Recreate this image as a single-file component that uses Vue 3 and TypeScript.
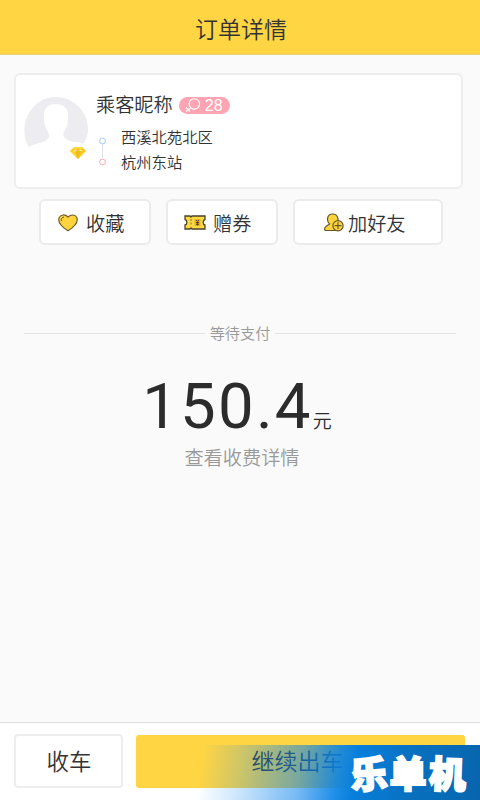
<script setup lang="ts">
const passenger = { name: '乘客昵称', age: 28 }
const route = { from: '西溪北苑北区', to: '杭州东站' }
const price = '150.4'
</script>

<template>
  <div class="page">
    <header class="header"><h1>订单详情</h1></header>

    <section class="card">
      <div class="avatar">
        <svg width="64" height="64" viewBox="0 0 64 64">
          <path d="M5 50C-1 42-1 27 4 18C10 6 20 0 32 0C49 0 64 14 64 32C64 38 62 43 59 47C54 44 50 46 46 44C39 41 38 38 41 33C44 28 44 24 44 18C44 11 39 7 32 7C24 7 20 11 20 18C20 25 20 28 23 33C26 39 26 41 21 44C17 46 10 47 5 50Z" fill="#ececf1" />
        </svg>
        <svg class="gem" width="16" height="13" viewBox="0 0 16 13">
          <path d="M4 1H12L16 5L8 13L0 5Z" fill="#fbc91d" />
          <path d="M4 1L5 5L8 1.5L11 5L12 1Z" fill="#ffd94f" />
          <path d="M0 5H5L8 13Z" fill="#ffd22f" />
          <path d="M5 5H11L8 13Z" fill="#f2bb1d" />
          <path d="M3.5 4.5L5 5L6.5 4.5M9.5 4.5H12" stroke="#fff4b9" fill="none" />
        </svg>
      </div>
      <div class="info">
        <div class="person">
          <span class="name">{{ passenger.name }}</span>
          <span class="badge">
            <svg width="16" height="14" viewBox="0 0 16 14" fill="none" stroke="#fff" stroke-width="1.1">
              <circle cx="9.3" cy="5.9" r="5.2" />
              <path d="M6 9.5L1 13.5M1 9.5L5 13.5" />
            </svg>
            <span>{{ passenger.age }}</span>
          </span>
        </div>
        <div class="route">
          <svg width="9" height="30" viewBox="0 0 9 30" fill="none">
            <path d="M4.5 8V22" stroke="#dedfe5" />
            <circle cx="4.5" cy="5" r="2.9" stroke="#a5cdfa" />
            <circle cx="4.5" cy="26" r="2.9" stroke="#f7a9b5" />
          </svg>
          <div class="stops"><span>{{ route.from }}</span><span>{{ route.to }}</span></div>
        </div>
      </div>
    </section>

    <nav class="actions">
      <button class="action">
        <svg width="20" height="18" viewBox="0 0 20 18">
          <path d="M10 3C7-.1 2.4.4 1 4C-.5 9 4 13 10 16.8C16 13 20.5 9 19 4C17.6.4 13 0 10 3Z" fill="#ffd43d" stroke="#6b5c2f" stroke-width="1.15" />
          <path d="M3.3 7C3 4.8 4 3.2 6 3" fill="none" stroke="#5e512c" />
        </svg>
        <span>收藏</span>
      </button>
      <button class="action">
        <svg width="22" height="15" viewBox="0 0 22 15">
          <path d="M1 1H6L7 2L8 1H21V4.5C18.5 5 18.5 9.5 21 10V14H8L7 13L6 14H1V10C3.5 9.5 3.5 5 1 4.5Z" fill="#ffd942" stroke="#4b422a" stroke-width="1.3" />
          <path d="M7 4V11" stroke="#80702d" stroke-dasharray="2 1.5" />
          <path d="M10.5 4H16.5V11H10.5Z" fill="#e9ae2d" />
          <path d="M12 5L13.5 6.5L15 5M12 7.5H15M12 9.3H15M13.5 7V10.5" stroke="#55451e" fill="none" />
        </svg>
        <span>赠券</span>
      </button>
      <button class="action wide">
        <svg width="20" height="19" viewBox="0 0 20 19">
          <path d="M5.6 11C2.5 8.5 2.5 1 8.5 1C14.5 1 15.3 8 12.2 11L14 17.5H2C0 17.5.3 14.5 2 13.5Z" fill="#ffd43d" stroke="#66572b" stroke-width="1.2" />
          <circle cx="14" cy="12.7" r="5.1" fill="#ffd43d" stroke="#66572b" stroke-width="1.2" />
          <path d="M14 9.3V16.1M10.6 12.7H17.4" stroke="#66572b" stroke-width="1.2" />
        </svg>
        <span>加好友</span>
      </button>
    </nav>

    <main class="payment">
      <div class="status"><span>等待支付</span></div>
      <div class="amount"><span class="price">{{ price }}</span><span class="unit">元</span></div>
      <a class="details">查看收费详情</a>
    </main>

    <footer class="footer">
      <button class="stop">收车</button>
      <button class="continue">继续出车</button>
      <div class="brand"><span class="le">乐</span><span>单</span><span class="ji">机</span></div>
    </footer>
  </div>
</template>

<style>
body { margin: 0; }
</style>

<style scoped>
* { box-sizing: border-box; }
.page {
  width: 480px; height: 800px; display: flex; flex-direction: column;
  overflow: hidden; background: #fafafa; color: #333;
  font-family: "Noto Sans CJK SC", sans-serif; font-weight: 350;
}
.header {
  height: 55px; flex: none; background: #ffd543; border-bottom: 1px solid #eed175;
  display: flex; justify-content: center; padding: 11px 0 0 2px;
}
h1 { margin: 0; font-size: 23px; line-height: 34px; font-weight: 350; }
.card {
  height: 116px; flex: none; margin: 18px 17px 0 14px;
  border: 2px solid #eeeeee; border-radius: 6px; background: #fff;
  display: flex; padding: 17px 0 0 8px;
}
.avatar { position: relative; width: 64px; height: 64px; margin-top: 5px; }
.avatar svg { display: block; }
.avatar .gem { position: absolute; left: 46px; top: 49px; }
.info { margin-left: 8px; }
.person { display: flex; align-items: center; height: 24px; gap: 6px; }
.name { font-size: 19.2px; line-height: 24px; }
.badge {
  width: 51px; height: 17px; border-radius: 9px; background: #ffa4b2; color: #fff;
  display: flex; align-items: center; gap: 4px; padding-left: 6px; margin-top: 2px;
  font: 400 16px/17px "Liberation Sans", sans-serif;
}
.route { display: flex; padding-left: 2px; margin-top: 8px; }
.route svg { margin-top: 12px; }
.stops { display: flex; flex-direction: column; margin-left: 14px; font-size: 15.3px; line-height: 24.5px; }
.actions { display: flex; gap: 15px; padding: 10px 0 0 39px; flex: none; }
button { font-family: inherit; font-weight: 350; color: #333; padding: 0; }
.action {
  width: 112px; height: 46px; background: #fff; border: 2px solid #ebebeb; border-radius: 6px;
  display: flex; align-items: center; justify-content: flex-start; padding-left: 17px; gap: 8px;
  font-size: 19.2px; line-height: 28px;
}
.action svg { margin-top: 1px; }
.action span { margin-top: 1px; }
.action:nth-child(2) { padding-left: 16px; gap: 7px; }
.action.wide { width: 150px; padding-left: 29px; gap: 4px; }
.payment { display: flex; flex-direction: column; align-items: center; margin-top: 77px; }
.status {
  width: 432px; display: flex; align-items: center; gap: 5px; color: #999; font-size: 15.2px; line-height: 23px;
}
.status span { margin-top: -1px; margin-bottom: 1px; }
.status::before, .status::after { content: ''; flex: 1; height: 1px; background: #e2e2e2; }
.amount { display: flex; align-items: baseline; margin: 23px 0 0 -6px; height: 78px; color: #2c2c2c; }
.price { font: 400 63.5px/78px Roboto, sans-serif; letter-spacing: 2.2px; }
.unit { font-size: 19px; line-height: 28px; }
.details { color: #999; font-size: 19.2px; line-height: 28px; margin: -3px 0 0 4px; }
.footer {
  position: relative; height: 78px; margin-top: auto; flex: none; display: flex; gap: 13px;
  border-top: 1px solid #dcdfe3; background: #fff; padding: 11px 0 0 14px;
}
.stop { width: 109px; height: 54px; background: #fff; border: 2px solid #ededed; border-radius: 4px; font-size: 22.5px; padding: 0 0 3px 1px; }
.continue { width: 329px; height: 53px; margin-top: 1px; border: 0; border-radius: 3px; background: #ffd543; font-size: 23px; padding: 0 6px 3px 0; }
.brand {
  position: absolute; right: 0; bottom: 0; width: 285px; height: 55px;
  background: linear-gradient(98deg, rgba(30,145,245,0) 3%, rgba(20,138,240,.2) 16%, rgba(8,130,235,.55) 37%, rgba(8,130,230,.9) 50%, #087fdc 56%, #0870bf 76%, #0865ad 100%);
  color: #fff; display: flex; padding-left: 155px;
  font-size: 37px; line-height: 54px; font-weight: 900; -webkit-text-stroke: 2px #fff;
}
.brand span { width: 39.5px; }
.brand .le { transform: rotate(-4deg); }
.brand .ji { transform: rotate(2deg); }
</style>
